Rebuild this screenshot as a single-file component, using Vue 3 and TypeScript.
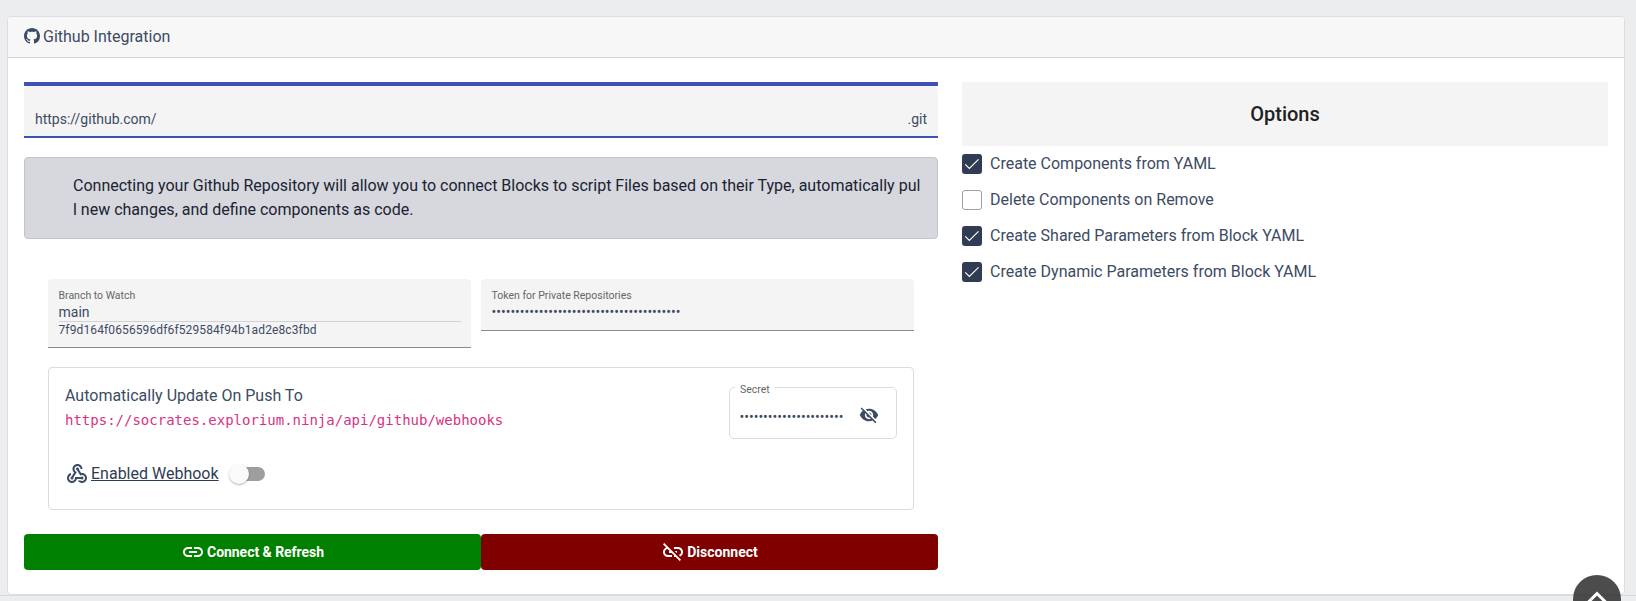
<script setup lang="ts">
import { ref } from 'vue'

interface Option {
  label: string
  checked: boolean
}

const options = ref<Option[]>([
  { label: 'Create Components from YAML', checked: true },
  { label: 'Delete Components on Remove', checked: false },
  { label: 'Create Shared Parameters from Block YAML', checked: true },
  { label: 'Create Dynamic Parameters from Block YAML', checked: true },
])

const token: string = '•'.repeat(40)
const secret: string = '•'.repeat(22)
</script>

<template>
  <div class="page">
    <section class="card">
      <header class="card-header">
        <svg class="gh" viewBox="0 0 16 16"><path d="M8 0C3.58 0 0 3.58 0 8c0 3.54 2.29 6.53 5.47 7.59.4.07.55-.17.55-.38 0-.19-.01-.82-.01-1.49-2.01.37-2.53-.49-2.69-.94-.09-.23-.48-.94-.82-1.13-.28-.15-.68-.52-.01-.53.63-.01 1.08.58 1.23.82.72 1.21 1.87.87 2.33.66.07-.52.28-.87.51-1.07-1.78-.2-3.64-.89-3.64-3.95 0-.87.31-1.59.82-2.15-.08-.2-.36-1.02.08-2.12 0 0 .67-.21 2.2.82.64-.18 1.32-.27 2-.27s1.36.09 2 .27c1.53-1.04 2.2-.82 2.2-.82.44 1.1.16 1.92.08 2.12.51.56.82 1.27.82 2.15 0 3.07-1.87 3.75-3.65 3.95.29.25.54.73.54 1.48 0 1.07-.01 1.93-.01 2.2 0 .21.15.46.55.38A8.01 8.01 0 0 0 16 8c0-4.42-3.58-8-8-8z" /></svg>
        <span>Github Integration</span>
      </header>
      <div class="card-body">
        <div class="left">
          <div class="bar"></div>
          <div class="repo"><span>https://github.com/</span><span>.git</span></div>
          <div class="alert">Connecting your Github Repository will allow you to connect Blocks to script Files based on their Type, automatically pul<br />l new changes, and define components as code.</div>
          <div class="fields">
            <div class="field branch">
              <label>Branch to Watch</label>
              <div class="value">main</div>
              <div class="sha">7f9d164f0656596df6f529584f94b1ad2e8c3fbd</div>
            </div>
            <div class="field token">
              <label>Token for Private Repositories</label>
              <div class="value dots">{{ token }}</div>
            </div>
          </div>
          <div class="hook">
            <div class="hook-info">
              <div class="hook-title">Automatically Update On Push To</div>
              <code>https://socrates.explorium.ninja/api/github/webhooks</code>
              <div class="hook-toggle">
                <svg class="icon24" viewBox="0 0 24 24"><path d="M10 15h5.88c.27-.31.67-.5 1.12-.5.83 0 1.5.67 1.5 1.5s-.67 1.5-1.5 1.5c-.44 0-.84-.19-1.12-.5H11.9c-.46 2.28-2.48 4-4.9 4-2.76 0-5-2.24-5-5 0-2.42 1.72-4.44 4-4.9v2.07c-1.16.41-2 1.53-2 2.83 0 1.65 1.35 3 3 3s3-1.35 3-3v-1zm2.5-11c1.65 0 3 1.35 3 3h2c0-2.76-2.24-5-5-5s-5 2.24-5 5c0 1.43.6 2.71 1.55 3.62l-2.35 3.9c-.68.14-1.2.75-1.2 1.48 0 .83.67 1.5 1.5 1.5s1.5-.67 1.5-1.5c0-.16-.02-.31-.07-.45l3.38-5.63C10.49 9.61 9.5 8.42 9.5 7c0-1.65 1.35-3 3-3zm4.5 9c-.64 0-1.23.2-1.72.54l-3.05-5.07C11.53 8.35 11 7.74 11 7c0-.83.67-1.5 1.5-1.5S14 6.17 14 7c0 .15-.02.29-.06.43l2.19 3.65c.28-.05.57-.08.87-.08 2.76 0 5 2.24 5 5s-2.24 5-5 5c-1.85 0-3.47-1.01-4.33-2.5h2.67c.48.32 1.05.5 1.66.5 1.65 0 3-1.35 3-3s-1.35-3-3-3z" /></svg>
                <span class="hook-link">Enabled Webhook</span>
                <span class="switch"><span class="thumb"></span></span>
              </div>
            </div>
            <div class="secret">
              <span class="secret-label">Secret</span>
              <span class="dots">{{ secret }}</span>
              <svg class="eye" viewBox="0 0 24 24"><path d="M12 7c2.76 0 5 2.24 5 5 0 .65-.13 1.26-.36 1.83l2.92 2.92c1.51-1.26 2.7-2.89 3.43-4.75-1.73-4.39-6-7.5-11-7.5-1.4 0-2.74.25-3.98.7l2.16 2.16C10.74 7.13 11.35 7 12 7zM2 4.27l2.28 2.28.46.46C3.08 8.3 1.78 10.02 1 12c1.73 4.39 6 7.5 11 7.5 1.55 0 3.03-.3 4.38-.84l.42.42L19.73 22 21 20.73 3.27 3 2 4.27zM7.53 9.8l1.55 1.55c-.05.21-.08.43-.08.65 0 1.66 1.34 3 3 3 .22 0 .44-.03.65-.08l1.55 1.55c-.67.33-1.41.53-2.2.53-2.76 0-5-2.24-5-5 0-.79.2-1.53.53-2.2zm4.31-.78l3.15 3.15.02-.16c0-1.66-1.34-3-3-3l-.17.01z" /></svg>
            </div>
          </div>
          <div class="buttons">
            <button class="btn connect" type="button">
              <svg class="icon24" viewBox="0 0 24 24"><path d="M3.9 12c0-1.71 1.39-3.1 3.1-3.1h4V7H7c-2.76 0-5 2.24-5 5s2.24 5 5 5h4v-1.9H7c-1.71 0-3.1-1.39-3.1-3.1zM8 13h8v-2H8v2zm9-6h-4v1.9h4c1.71 0 3.1 1.39 3.1 3.1s-1.39 3.1-3.1 3.1h-4V17h4c2.76 0 5-2.24 5-5s-2.24-5-5-5z" /></svg>
              <span>Connect &amp; Refresh</span>
            </button>
            <button class="btn disconnect" type="button">
              <svg class="icon24" viewBox="0 0 24 24"><path d="M17 7h-4v1.9h4c1.71 0 3.1 1.39 3.1 3.1 0 1.43-.98 2.63-2.31 2.98l1.46 1.46C20.88 15.61 22 13.95 22 12c0-2.76-2.24-5-5-5zm-1 4h-2.19l2 2H16v-2zM2 4.27l3.11 3.11C3.29 8.12 2 9.91 2 12c0 2.76 2.24 5 5 5h4v-1.9H7c-1.71 0-3.1-1.39-3.1-3.1 0-1.59 1.21-2.9 2.76-3.07L8.73 11H8v2h2.73L13 15.27V17h1.73l4.01 4L20 19.74 3.27 3 2 4.27z" /></svg>
              <span>Disconnect</span>
            </button>
          </div>
        </div>
        <aside class="right">
          <h2>Options</h2>
          <label v-for="option in options" :key="option.label" class="option">
            <span class="box" :class="{ checked: option.checked }">
              <svg v-if="option.checked" viewBox="0 0 20 20"><path d="M3.2 10.3l4.2 4.2 9.1-9.2" /></svg>
            </span>
            <span>{{ option.label }}</span>
          </label>
        </aside>
      </div>
    </section>
    <div class="footer-line"></div>
    <div class="to-top">
      <svg viewBox="0 0 48 48"><path d="M14 28.5l10-10 10 10" /></svg>
    </div>
  </div>
</template>

<style>
body { margin: 0; overflow: hidden; }
</style>

<style scoped>
.page {
  position: relative;
  box-sizing: border-box;
  height: 601px;
  padding: 16px 11px 0 7px;
  overflow: hidden;
  background: #ebedef;
  color: #3c4b64;
  font: 16px/24px Roboto, sans-serif;
}
.page * { box-sizing: border-box; }
svg { display: block; flex: none; fill: currentColor; }
.card {
  height: 579px;
  background: #fff;
  border: 1px solid #dcdde0;
  border-radius: 4px;
  overflow: hidden;
}
.card-header {
  display: flex;
  align-items: center;
  height: 41px;
  padding: 0 16px;
  background: #f7f7f7;
  border-bottom: 1px solid #d5d6d8;
}
.gh { width: 16px; height: 16px; margin: -2px 3px 0 0; }
.card-body { display: flex; gap: 24px; padding: 24px 16px; }
.left { width: 914px; }
.right { width: 646px; }
.bar { height: 4px; background: #3f51b5; }
.repo {
  display: flex;
  justify-content: space-between;
  height: 52px;
  padding: 21px 11px 0;
  background: #f4f4f4;
  border-bottom: 2px solid #3f51b5;
  border-radius: 4px 4px 0 0;
  font-size: 14px;
  line-height: 24px;
}
.alert {
  height: 82px;
  margin-top: 19px;
  padding: 16px 0 0 48px;
  white-space: nowrap;
  background: #d6d8dd;
  border: 1px solid #c0c4cd;
  border-radius: 4px;
  color: #1a2233;
}
.fields {
  display: flex;
  align-items: flex-start;
  gap: 10px;
  height: 88px;
  margin: 40px 24px 0;
}
.field {
  padding: 10px 10px 0 10.5px;
  background: #f4f4f4;
  border-bottom: 1px solid #8a8a8a;
  border-radius: 4px 4px 0 0;
}
.branch { width: 423px; height: 69px; }
.token { width: 433px; height: 52px; }
.field label { display: block; font-size: 10.5px; line-height: 13px; color: #666; }
.value { height: 20px; font-size: 14px; line-height: 20px; }
.branch .value { border-bottom: 1px solid #d0d2d5; }
.sha { font-size: 12px; line-height: 16px; letter-spacing: 0.12px; }
.dots { font-size: 14px; white-space: nowrap; }
.hook {
  display: flex;
  justify-content: space-between;
  height: 143px;
  margin: 0 24px;
  padding: 16px;
  border: 1px solid #dcdcdc;
  border-radius: 4px;
}
.hook-title { line-height: 24px; }
code { display: block; color: #d63384; font: 14px/24px "DejaVu Sans Mono", monospace; }
.hook-toggle { display: flex; align-items: center; margin-top: 30px; }
.icon24 { width: 24px; height: 24px; }
.hook-link { margin-left: 2px; color: #2f3c54; text-decoration: underline; }
.switch {
  display: flex;
  align-items: center;
  width: 34px;
  height: 14px;
  margin-left: 12px;
  border-radius: 7px;
  background: #9e9e9e;
}
.thumb {
  width: 20px;
  height: 20px;
  flex: none;
  margin-left: -2px;
  border-radius: 50%;
  background: #fafafa;
  box-shadow: 0 1px 2px rgba(0, 0, 0, 0.3);
}
.secret {
  position: relative;
  display: flex;
  align-items: center;
  justify-content: space-between;
  width: 168px;
  height: 52px;
  margin-top: 3px;
  padding: 7px 17px 0 9.5px;
  border: 1px solid #dcdcdc;
  border-radius: 5px;
}
.secret-label {
  position: absolute;
  top: -5px;
  left: 5px;
  padding: 0 5px;
  background: #fff;
  color: #666;
  font-size: 10.5px;
  line-height: 14px;
}
.eye { width: 20px; height: 20px; margin-top: -4px; }
.buttons { display: flex; margin-top: 24px; }
.btn {
  display: flex;
  align-items: center;
  justify-content: center;
  gap: 2px;
  width: 457px;
  height: 36px;
  padding: 0;
  border: 0;
  border-radius: 4px;
  color: #fff;
  font: 700 14px/36px Roboto, sans-serif;
}
.connect { background: green; letter-spacing: -0.04px; }
.disconnect { background: maroon; }
h2 {
  height: 64px;
  margin: 0;
  background: #f4f4f4;
  color: #212121;
  font: 500 20px/64px Roboto, sans-serif;
  text-align: center;
}
.option { display: flex; align-items: center; gap: 8px; height: 36px; }
.box {
  width: 20px;
  height: 20px;
  border: 1px solid #a0a0a0;
  border-radius: 3px;
}
.box.checked { border: 0; background: #303c54; }
.box path { fill: none; stroke: #fff; stroke-width: 1.15; }
.footer-line { height: 1px; margin: 0 -11px 0 -7px; background: #d8dbe0; }
.to-top {
  position: absolute;
  top: 575px;
  left: 1573px;
  width: 48px;
  height: 48px;
  border-radius: 50%;
  background: rgba(51, 51, 51, 0.88);
}
.to-top path { fill: none; stroke: #fff; stroke-width: 3; }
</style>
